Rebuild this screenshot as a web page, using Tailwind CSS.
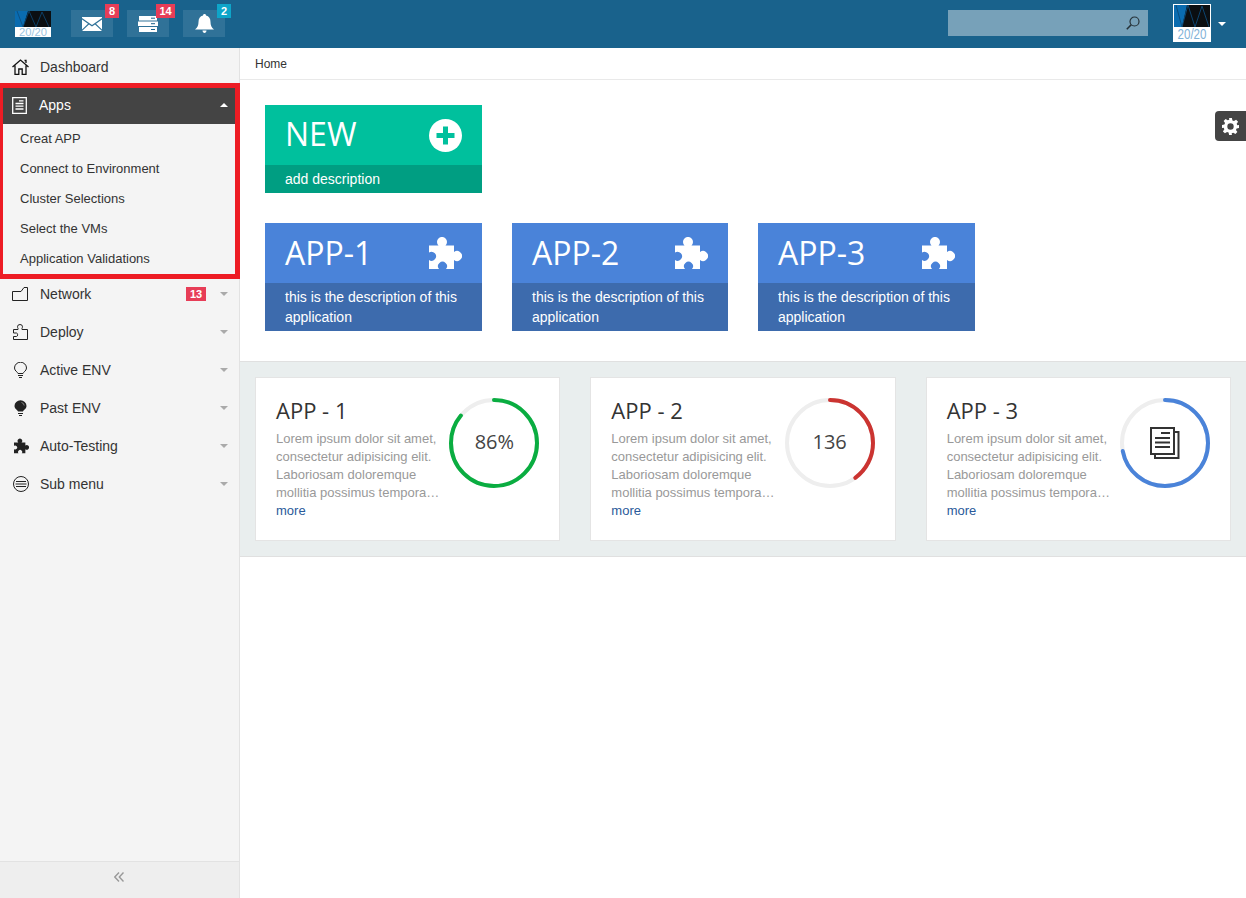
<!DOCTYPE html>
<html lang="en">
<head>
    <meta charset="UTF-8">
    <meta name="viewport" content="width=device-width, initial-scale=1.0">
    <title>Apps</title>
    <script src="https://cdn.jsdelivr.net/npm/@tailwindcss/browser@4"></script>
</head>
<body class="bg-white text-[#333] font-['Liberation_Sans',Arial,sans-serif] h-screen flex flex-col overflow-hidden">

    <svg class="hidden">
        <symbol id="puzzle" viewBox="0 0 33 32">
            <path d="M0 8.500H9.500A5 5 0 1 1 16.500 8.500H25V15A5 5 0 1 1 25 23V32H17A4.500 4.500 0 1 0 10 32H0V23.050A4.500 4.500 0 1 0 0 15.550Z" fill="currentColor"/>
        </symbol>
    </svg>

    <header class="h-12 shrink-0 bg-[#19628c] flex items-center">
        <svg class="w-9 h-[26px] ml-[15px]" viewBox="0 0 36 26">
            <rect width="36" height="16" fill="#0b0f12"/>
            <polygon points="0,0 13,0 8,16 0,16" fill="#0a6cb0"/>
            <polyline points="2,0 8,16 14,0 21,16 27,1 34,16" fill="none" stroke="#0c4a78" stroke-width="0.8"/>
            <rect y="16" width="36" height="10" fill="#fff"/>
            <text x="18" y="25" text-anchor="middle" font-size="10.500" textLength="28" lengthAdjust="spacingAndGlyphs" font-family="Liberation Sans" fill="#9cc4e0">20/20</text>
        </svg>
        <div class="flex gap-[14px] ml-5 mb-[1px]">
            <div class="relative w-[42px] h-[27px] bg-white/10 flex items-center justify-center">
                <svg class="w-5 h-[14px] text-white" viewBox="0 0 20 14"><path d="M0 0H20V1L10 8 0 1ZM0 2.500L6 6.800 0 12.500ZM20 2.500L14 6.800 20 12.500ZM7 7.500L10 9.600 13 7.500 20 14H0Z" fill="currentColor"/></svg>
                <span class="absolute left-[34px] top-[-6px] w-[14px] h-[14px] bg-[#e73d57] text-white text-[11px] font-bold leading-[14px] text-center">8</span>
            </div>
            <div class="relative w-[42px] h-[27px] bg-white/10 flex items-center justify-center">
                <svg class="w-5 h-4 text-white" viewBox="0 0 20 16"><path d="M1 0H19V4.500H1ZM0 5.500H20V10H0ZM1 11H19V16H1Z" fill="currentColor"/><path d="M13 2.200H17M13 7.700H17M13 13.500H17" stroke="#19628c" stroke-width="1"/></svg>
                <span class="absolute left-[29px] top-[-6px] w-[19px] h-[14px] bg-[#e73d57] text-white text-[11px] font-bold leading-[14px] text-center">14</span>
            </div>
            <div class="relative w-[42px] h-[27px] bg-white/10 flex items-center justify-center">
                <svg class="w-[19px] h-[19px] text-white" viewBox="0 0 19 19"><path d="M9.500 0C10.500 0 11 .6 11 1.500 14 2.300 15.500 4.500 15.500 8 15.500 11.500 16.500 13.500 19 15.500H0C2.500 13.500 3.500 11.500 3.500 8 3.500 4.500 5 2.300 8 1.500 8 .6 8.500 0 9.500 0ZM7.500 16.500H11.500C11.500 18 10.500 19 9.500 19S7.500 18 7.500 16.500Z" fill="currentColor"/></svg>
                <span class="absolute left-[34px] top-[-6px] w-[14px] h-[14px] bg-[#0ea5c9] text-white text-[11px] font-bold leading-[14px] text-center">2</span>
            </div>
        </div>
        <div class="ml-auto w-[200px] h-[26px] mt-[-2px] bg-[#77a1b9] flex items-center justify-end pr-[8px]">
            <svg class="w-[14px] h-[14px] text-[#263238]" viewBox="0 0 14 14" fill="none" stroke="currentColor" stroke-width="1.200"><circle cx="8.500" cy="5.500" r="4.500"/><path d="M5.200 8.800L.8 13.200" stroke-width="1.600"/></svg>
        </div>
        <div class="w-[38px] h-[38px] ml-[25px] bg-white p-[1px] mt-[-2px]">
            <svg class="w-9 h-9" viewBox="0 0 36 36">
                <rect width="36" height="22" fill="#0b0f12"/>
                <polygon points="0,0 13,0 8,22 0,22" fill="#0a6cb0"/>
                <polyline points="2,0 8,22 14,0 21,22 28,1 35,22" fill="none" stroke="#0c4a78" stroke-width="0.9"/>
                <text x="18" y="34" text-anchor="middle" font-size="15" textLength="29" lengthAdjust="spacingAndGlyphs" font-family="Liberation Sans" fill="#7fb2d8">20/20</text>
            </svg>
        </div>
        <div class="ml-[7px] mr-5 w-0 h-0 border-x-[4px] border-x-transparent border-t-[4px] border-t-white"></div>
    </header>

    <div class="flex-1 flex min-h-0">
        <aside class="relative w-[240px] shrink-0 bg-[#f4f4f4] border-r border-[#e2e2e2] flex flex-col">
            <nav class="flex-1 text-sm">
                <a class="h-[38px] flex items-center pb-[1px]">
                    <svg class="w-[17px] h-[16px] ml-3 text-[#111]" viewBox="0 0 17 16" fill="none" stroke="currentColor" stroke-width="1.300"><path d="M.5 8L8.500 1 16.500 8M3 6.500V15.400H6.800V10H10.200V15.400H14V6.500M12.500 1.500H14V4"/></svg>
                    <span class="ml-[11px]">Dashboard</span>
                </a>
                <a class="h-[38px] bg-[#444] text-white flex items-center">
                    <svg class="w-[15px] h-[17px] ml-3 text-white" viewBox="0 0 15 17" fill="none" stroke="currentColor" stroke-width="1.300"><path d="M.7.700H14.300V16.300H.7ZM7 3.800H11.500M3.500 6.500H11.500M3.500 9.200H11.500M3.500 12H11.500"/></svg>
                    <span class="ml-3">Apps</span>
                    <i class="ml-auto mr-[11px] w-0 h-0 border-x-[4px] border-x-transparent border-b-[4px] border-b-white"></i>
                </a>
                <ul class="text-[13px] pb-[1px]">
                    <li class="h-[30px] flex items-center pl-5">Creat APP</li>
                    <li class="h-[30px] flex items-center pl-5">Connect to Environment</li>
                    <li class="h-[30px] flex items-center pl-5">Cluster Selections</li>
                    <li class="h-[30px] flex items-center pl-5">Select the VMs</li>
                    <li class="h-[30px] flex items-center pl-5">Application Validations</li>
                </ul>
                <a class="h-[38px] flex items-center">
                    <svg class="w-4 h-[14px] ml-3 text-[#222]" viewBox="0 0 16 14" fill="none" stroke="currentColor"><path d="M.5 4.500L9 4.500 12 .5H15.500V13.500H.5Z"/></svg>
                    <span class="ml-3">Network</span>
                    <span class="ml-auto w-5 h-[14px] bg-[#e73d57] text-white text-[11px] font-bold leading-[14px] text-center">13</span>
                    <i class="ml-[14px] mr-[11px] w-0 h-0 border-x-[4px] border-x-transparent border-t-[4px] border-t-[#aaa]"></i>
                </a>
                <a class="h-[38px] flex items-center">
                    <svg class="w-[15px] h-4 ml-[13px] text-[#222]" viewBox="0 0 15 16" fill="none" stroke="currentColor"><path d="M.5 5.500H5C5.500 4.500 4.500 4 4.500 2.800A2.500 2.300 0 0 1 9.500 2.800C9.500 4 8.500 4.500 9 5.500H14.500V15.500H.5V12.500H3.500C5 12.500 5 9 3.500 9H.5Z"/></svg>
                    <span class="ml-3">Deploy</span>
                    <i class="ml-auto mr-[11px] w-0 h-0 border-x-[4px] border-x-transparent border-t-[4px] border-t-[#aaa]"></i>
                </a>
                <a class="h-[38px] flex items-center">
                    <svg class="w-[13px] h-[17px] ml-[14px] text-[#222]" viewBox="0 0 13 17" fill="none" stroke="currentColor"><path d="M4 11.500C3.800 10 .5 9 .5 6A6 5.800 0 0 1 12.500 6C12.500 9 9.200 10 9 11.500ZM4 13.500H9M5 15.500H8"/></svg>
                    <span class="ml-[13px]">Active ENV</span>
                    <i class="ml-auto mr-[11px] w-0 h-0 border-x-[4px] border-x-transparent border-t-[4px] border-t-[#aaa]"></i>
                </a>
                <a class="h-[38px] flex items-center">
                    <svg class="w-[13px] h-[17px] ml-[14px] text-[#222]" viewBox="0 0 13 17"><path d="M4 11.500C3.800 10 .5 9 .5 6A6 5.800 0 0 1 12.500 6C12.500 9 9.200 10 9 11.500Z" fill="currentColor"/><path d="M4 13.500H9M5 15.500H8" stroke="currentColor"/><path d="M7.500 2.500A3.500 3.500 0 0 1 10.200 5.500" fill="none" stroke="#999" stroke-width="0.8"/></svg>
                    <span class="ml-[13px]">Past ENV</span>
                    <i class="ml-auto mr-[11px] w-0 h-0 border-x-[4px] border-x-transparent border-t-[4px] border-t-[#aaa]"></i>
                </a>
                <a class="h-[38px] flex items-center">
                    <svg class="w-[15px] h-[16px] ml-[14px] mr-[-1px] text-[#222]"><use href="#puzzle"/></svg>
                    <span class="ml-3">Auto-Testing</span>
                    <i class="ml-auto mr-[11px] w-0 h-0 border-x-[4px] border-x-transparent border-t-[4px] border-t-[#aaa]"></i>
                </a>
                <a class="h-[38px] flex items-center">
                    <svg class="w-4 h-4 ml-[13px] text-[#222]" viewBox="0 0 16 16" fill="none" stroke="currentColor"><circle cx="8" cy="8" r="7.500"/><path d="M3 5.500H13M2.500 8H13.500M3 10.500H13"/></svg>
                    <span class="ml-[11px]">Sub menu</span>
                    <i class="ml-auto mr-[11px] w-0 h-0 border-x-[4px] border-x-transparent border-t-[4px] border-t-[#aaa]"></i>
                </a>
            </nav>
            <div class="h-[37px] shrink-0 bg-[#eee] border-t border-[#e2e2e2] flex items-center justify-center text-[#999] pb-[6px]">
                <svg class="w-[10px] h-[10px] mr-[1px]" viewBox="0 0 10 10" fill="none" stroke="currentColor" stroke-width="1.400"><path d="M5 .5L.8 5 5 9.500M9.500 .5L5.300 5 9.500 9.500"/></svg>
            </div>
            <div class="absolute left-0 top-[35px] w-[240px] h-[196px] border-[5px] border-l-[3px] border-[#ed1c24]"></div>
        </aside>

        <main class="relative flex-1 min-w-0">
            <div class="h-8 border-b border-[#e9e9e9] flex items-center pl-[15px] text-xs">Home</div>

            <button class="absolute right-0 top-[63px] w-[31px] h-[30px] bg-[#444] rounded-l-[4px] flex items-center justify-center">
                <svg class="w-[17px] h-[17px] text-white" viewBox="0 0 24 24" fill="currentColor" fill-rule="evenodd"><path d="M10 0H14L14.700 3.500 16.900 4.400 19.900 2.400 22.700 5.200 20.700 8.200 21.600 10.400 24 10V14L20.600 14.700 19.700 16.900 21.700 19.900 18.900 22.700 15.900 20.700 13.700 21.600 14 24H10L9.300 20.600 7.100 19.700 4.100 21.700 1.300 18.900 3.300 15.900 2.400 13.700 0 14V10L3.400 9.300 4.300 7.100 2.300 4.100 5.100 1.300 8.100 3.300 10.300 2.400ZM12 7.500A4.500 4.500 0 1 0 12 16.500 4.500 4.500 0 0 0 12 7.500Z"/></svg>
            </button>

            <section class="px-[25px] pt-[25px] pb-[30px] text-white">
                <div class="w-[217px]">
                    <div class="h-[60px] bg-[#00c09d] flex items-center justify-between pl-[21px] pr-5">
                        <span class="font-['Open_Sans',sans-serif] text-[32px] leading-[40px] mb-[2px] ml-[-1px]">NEW</span>
                        <svg class="w-[33px] h-[33px]" viewBox="0 0 33 33"><circle cx="16.500" cy="16.500" r="16.500" fill="#fff"/><path d="M14 7.500H19V14H25.500V19H19V25.500H14V19H7.500V14H14Z" fill="#00c09d"/></svg>
                    </div>
                    <p class="h-7 bg-[#009e82] pl-5 text-sm leading-7">add description</p>
                </div>
                <div class="mt-[30px] flex gap-[30px]">
                    <div class="w-[217px]">
                        <div class="h-[60px] bg-[#4a83d9] flex items-center justify-between pl-5 pr-5">
                            <span class="font-['Open_Sans',sans-serif] text-[32px] leading-[40px]">APP-1</span>
                            <svg class="w-[33px] h-8 text-white"><use href="#puzzle"/></svg>
                        </div>
                        <p class="h-12 bg-[#3d6bad] px-5 pt-1 text-sm leading-5">this is the description of this application</p>
                    </div>
                    <div class="w-[216px]">
                        <div class="h-[60px] bg-[#4a83d9] flex items-center justify-between pl-5 pr-5">
                            <span class="font-['Open_Sans',sans-serif] text-[32px] leading-[40px]">APP-2</span>
                            <svg class="w-[33px] h-8 text-white"><use href="#puzzle"/></svg>
                        </div>
                        <p class="h-12 bg-[#3d6bad] px-5 pt-1 text-sm leading-5">this is the description of this application</p>
                    </div>
                    <div class="w-[217px]">
                        <div class="h-[60px] bg-[#4a83d9] flex items-center justify-between pl-5 pr-5">
                            <span class="font-['Open_Sans',sans-serif] text-[32px] leading-[40px]">APP-3</span>
                            <svg class="w-[33px] h-8 text-white"><use href="#puzzle"/></svg>
                        </div>
                        <p class="h-12 bg-[#3d6bad] px-5 pt-1 text-sm leading-5">this is the description of this application</p>
                    </div>
                </div>
            </section>

            <section class="bg-[#e9eeee] border-y border-[#e0e0e0] py-[15px] px-[15px] grid grid-cols-3 gap-[30px]">
                <div class="h-[164px] bg-white border border-[#e4e4e4] flex pl-5 pr-5">
                    <div class="w-[170px]">
                        <h3 class="font-['Open_Sans',sans-serif] text-[22px] leading-[30px] mt-[17px] text-[#333]">APP - 1</h3>
                        <p class="text-[13px] leading-[18px] text-[#999] mt-[5px]">Lorem ipsum dolor sit amet, consectetur adipisicing elit. Laboriosam doloremque mollitia possimus tempora…</p>
                        <a class="block text-[13px] leading-[18px] text-[#2a5a9a]">more</a>
                    </div>
                    <div class="relative ml-auto mt-5 w-[90px] h-[90px]">
                        <svg class="w-[90px] h-[90px] -rotate-90" viewBox="0 0 90 90" fill="none" stroke-width="4"><circle cx="45" cy="45" r="43" stroke="#eee"/><circle cx="45" cy="45" r="43" stroke="#0aad41" pathLength="100" stroke-dasharray="86 100" stroke-linecap="round"/></svg>
                        <span class="absolute inset-0 flex items-center justify-center font-['Open_Sans',sans-serif] text-[20px] text-[#444] pb-[2px]">86%</span>
                    </div>
                </div>
                <div class="h-[164px] bg-white border border-[#e4e4e4] flex pl-5 pr-5">
                    <div class="w-[170px]">
                        <h3 class="font-['Open_Sans',sans-serif] text-[22px] leading-[30px] mt-[17px] text-[#333]">APP - 2</h3>
                        <p class="text-[13px] leading-[18px] text-[#999] mt-[5px]">Lorem ipsum dolor sit amet, consectetur adipisicing elit. Laboriosam doloremque mollitia possimus tempora…</p>
                        <a class="block text-[13px] leading-[18px] text-[#2a5a9a]">more</a>
                    </div>
                    <div class="relative ml-auto mt-5 w-[90px] h-[90px]">
                        <svg class="w-[90px] h-[90px] -rotate-90" viewBox="0 0 90 90" fill="none" stroke-width="4"><circle cx="45" cy="45" r="43" stroke="#eee"/><circle cx="45" cy="45" r="43" stroke="#cb3431" pathLength="100" stroke-dasharray="40 100" stroke-linecap="round"/></svg>
                        <span class="absolute inset-0 flex items-center justify-center font-['Open_Sans',sans-serif] text-[20px] text-[#444] pb-[2px]">136</span>
                    </div>
                </div>
                <div class="h-[164px] bg-white border border-[#e4e4e4] flex pl-5 pr-5">
                    <div class="w-[170px]">
                        <h3 class="font-['Open_Sans',sans-serif] text-[22px] leading-[30px] mt-[17px] text-[#333]">APP - 3</h3>
                        <p class="text-[13px] leading-[18px] text-[#999] mt-[5px]">Lorem ipsum dolor sit amet, consectetur adipisicing elit. Laboriosam doloremque mollitia possimus tempora…</p>
                        <a class="block text-[13px] leading-[18px] text-[#2a5a9a]">more</a>
                    </div>
                    <div class="relative ml-auto mt-5 w-[90px] h-[90px]">
                        <svg class="w-[90px] h-[90px] -rotate-90" viewBox="0 0 90 90" fill="none" stroke-width="4"><circle cx="45" cy="45" r="43" stroke="#eee"/><circle cx="45" cy="45" r="43" stroke="#4a83d9" pathLength="100" stroke-dasharray="72 100" stroke-linecap="round"/></svg>
                        <span class="absolute inset-0 flex items-center justify-center">
                            <svg class="w-[30px] h-8 text-[#333]" viewBox="0 0 30 32" fill="none" stroke="currentColor" stroke-width="2"><path d="M1 1H24V27H1ZM25 5H28.500V31H5V28M11 6H20" /><path d="M5 11H20M5 15.500H20M5 20H20"/></svg>
                        </span>
                    </div>
                </div>
            </section>
        </main>
    </div>

</body>
</html>
